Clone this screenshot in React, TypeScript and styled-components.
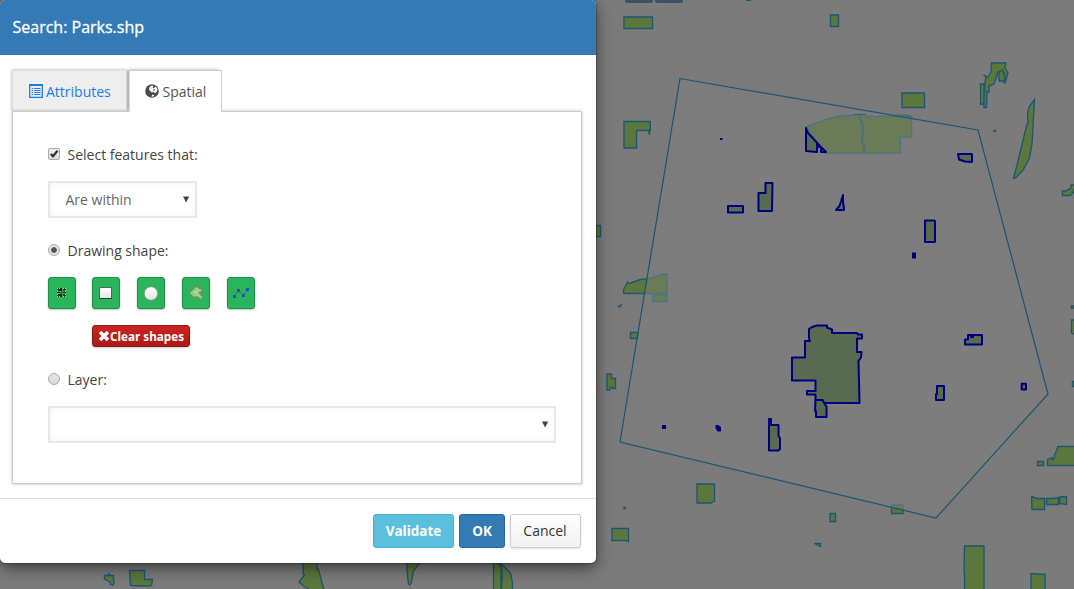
import React from 'react';
import styled, { createGlobalStyle } from 'styled-components';

const GlobalStyle = createGlobalStyle`
  * { box-sizing: border-box; }
  body {
    margin: 0;
    overflow: hidden;
    background: #7b7b7b;
    font-family: "Open Sans", "Noto Sans", sans-serif;
    font-size: 14px;
    color: #444;
  }
`;

const Page = styled.div`
  position: relative;
  width: 1074px;
  height: 589px;
  overflow: hidden;
`;

const MapCanvas = styled.svg`
  position: absolute;
  inset: 0;
  display: block;
  .park { fill: #5c773c; stroke: #1c5673; stroke-width: 1.35; }
  .faded { fill: #6b7b58; stroke: #4c7580; stroke-width: 1.35; }
  .divider { fill: none; stroke: #4f7078; stroke-width: 2.5; }
  .selected { fill: #566b50; stroke: #00007f; stroke-width: 2; stroke-linejoin: round; }
  .area { fill: #7d7d7d; stroke: none; }
  .outline { fill: none; stroke: #1c5673; stroke-width: 1.2; }
`;

const Dialog = styled.section`
  position: relative;
  width: 596px;
  height: 563px;
  display: flex;
  flex-direction: column;
  background: #fff;
  border-radius: 5px;
  box-shadow: 0 5px 15px rgba(0, 0, 0, 0.5), 0 0 2px rgba(0, 0, 0, 0.7);
`;

const Header = styled.header`
  height: 55px;
  padding: 0 12.5px;
  flex: none;
  display: flex;
  align-items: center;
  background: #337ab7;
  border-bottom: 1px solid #3273a9;
  border-radius: 5px 5px 0 0;
  color: #fff;
  font-size: 16px;
  -webkit-text-stroke: 0.3px #fff;
`;

const Body = styled.div`
  height: 443px;
  padding: 15px 14px 0 12px;
`;

const Tabs = styled.nav`
  display: flex;
  gap: 2px;
  height: 41px;
`;

const Tab = styled.div<{ $active?: boolean }>`
  position: relative;
  z-index: ${p => (p.$active ? 2 : 0)};
  width: ${p => (p.$active ? 93 : 115)}px;
  height: ${p => (p.$active ? 42 : 41)}px;
  padding: 1px 0 ${p => (p.$active ? 2 : 0)}px ${p => (p.$active ? 15 : 16)}px;
  display: flex;
  align-items: center;
  gap: ${p => (p.$active ? 3.5 : 3)}px;
  font-size: 14px;
  color: ${p => (p.$active ? '#555' : '#1a7cf5')};
  background: ${p => (p.$active ? '#fff' : '#eee')};
  border: 1px solid ${p => (p.$active ? '#ccc' : '#e2e2e2')};
  border-bottom: 0;
  border-left-color: #ddd;
  box-shadow: ${p => (p.$active ? '-2px -1px 3px -1px rgba(0,0,0,.4)' : '0 0 3px rgba(0,0,0,.35)')};
  clip-path: inset(-4px ${p => (p.$active ? 0 : -2)}px 0 -3px);
  svg { flex: none; margin-bottom: ${p => (p.$active ? 0 : 2)}px; }
`;

const Panel = styled.div`
  position: relative;
  z-index: 1;
  height: 373px;
  padding: 33px 25px 0 35px;
  background: #fff;
  border: 1px solid #ccc;
  box-shadow: 0 0 3px rgba(0, 0, 0, 0.25);
`;

const Choice = styled.label`
  display: flex;
  align-items: center;
  gap: 7px;
  height: 18px;
`;

const Check = styled.span`
  width: 12px;
  height: 12px;
  margin-right: 0.5px;
  border: 1px solid #aaa;
  border-radius: 2px;
  background: linear-gradient(#eee, #ddd);
  svg { display: block; overflow: visible; }
`;

const Radio = styled.span<{ $on?: boolean }>`
  width: 12px;
  height: 12px;
  margin-right: 0.5px;
  border: 1px solid #aaa;
  border-radius: 50%;
  background: ${p => (p.$on ? 'radial-gradient(circle, #555 0 2.4px, #e3e3e3 3.3px)' : 'linear-gradient(#e8e8e8, #d8d8d8)')};
`;

const Select = styled.div<{ $wide?: boolean }>`
  width: ${p => (p.$wide ? 508 : 149)}px;
  height: 37px;
  margin: ${p => (p.$wide ? '18px 0 0' : '18px 0 23px')};
  padding: 0 5px 0 15.5px;
  display: flex;
  align-items: center;
  justify-content: space-between;
  color: #666;
  border: 2px solid #e8e8e8;
  background: #fff;
  box-shadow: inset 0 0 5px rgba(0, 0, 0, 0.05);
  svg { margin-bottom: 1px; }
`;

const Tools = styled.div`
  display: flex;
  gap: 17px;
  margin-top: 18px;
`;

const Tool = styled.button`
  width: 28px;
  height: 32px;
  padding: 0;
  border: 1px solid #208e46;
  border-radius: 3px;
  background: #2ab45c;
  box-shadow: 0 1px 2px rgba(0, 0, 0, 0.25);
  display: flex;
  align-items: center;
  justify-content: center;
  &:first-child { margin-right: -1px; }
`;

const ClearButton = styled.button`
  width: 98px;
  height: 22px;
  margin: 16px 0 23px 44px;
  padding: 0 0 1px;
  display: flex;
  align-items: center;
  justify-content: center;
  border: 1px solid #8b1714;
  border-radius: 3px;
  background: linear-gradient(#cb2422, #ac1a18);
  box-shadow: 0 1px 2px rgba(0, 0, 0, 0.2);
  color: #fff;
  font: bold 11.7px "Open Sans", sans-serif;
  white-space: nowrap;
  svg { flex: none; }
`;

const Footer = styled.footer`
  height: 65px;
  padding: 15px 15px 0;
  display: flex;
  justify-content: flex-end;
  gap: 5px;
  border-top: 1px solid #ddd;
`;

const tones = {
  info: ['#5bc0de', '#46b0cf', '#fff'],
  primary: ['#337ab7', '#2c6699', '#fff'],
  plain: ['linear-gradient(#fff, #f1f1f1)', '#ccc', '#333'],
};

const Action = styled.button<{ $tone: keyof typeof tones; $width: number }>`
  width: ${p => p.$width}px;
  height: 34px;
  padding: 0 ${p => (p.$tone === 'plain' ? 1 : 0)}px 1px 0;
  border: 1px solid ${p => tones[p.$tone][1]};
  border-radius: 3px;
  background: ${p => tones[p.$tone][0]};
  color: ${p => tones[p.$tone][2]};
  font: ${p => (p.$tone === 'plain' ? '400 14px' : '700 13.5px')} "Open Sans", sans-serif;
  ${p => p.$tone === 'plain' && 'box-shadow: 0 1px 2px rgba(0,0,0,.12);'}
`;

const Arrow = () => (
  <svg width="7" height="7" viewBox="0 0 7 7"><path d="M0 .5H6.2L3.1 6.5Z" fill="#444" /></svg>
);

const ListIcon = () => (
  <svg width="14" height="14" viewBox="0 0 14 14" fill="none" stroke="#1a7cf5">
    <path d="M.7 .7H13.3V13.3H.7Z M.5 1.3H13.5" strokeWidth="1.3" />
    <path d="M2.7 4.500H4.200M2.700 6.500H4.200M2.700 8.500H4.200M2.700 10.500H4.200M5.200 4.500H11.500M5.200 6.500H11.500M5.200 8.500H11.500M5.200 10.500H11.500" />
  </svg>
);

const GlobeIcon = () => (
  <svg width="14" height="14" viewBox="0 0 14 14">
    <circle cx="7" cy="7" r="6.8" fill="#4a4a4a" />
    <path d="M4.600 3 7 1.300 8.600 2 7.700 3.500 8.800 4.300 10.900 2.600 12.600 5.300 11.600 7.800 10.200 9.300 8.600 8 6.700 8.500 5.200 7 4 5.600Z M7.300 10.600 9.500 11.300 8.300 12.600 6.500 12.700Z" fill="#fff" />
    <path d="M8.400 5.300 10 5.600 9.300 6.800 8.200 6.500Z M5.400 4 6.400 3.600 6.200 4.700Z" fill="#4a4a4a" />
  </svg>
);

const SpatialMap = () => (
  <MapCanvas width="1074" height="589" viewBox="0 0 1074 589">
    <path className="area" d="M680 78 978 130 1048 394 936 518 620 442Z" />
    <path d="M625 0H653V1Q653 3 651 3H627Q625 3 625 1ZM655 0H683V1Q683 3 681 3H657Q655 3 655 1Z" fill="#3f5069" />
    <path d="M746 0H751V1H746Z" fill="#1c5673" />
    <g className="park">
      <path d="M624 17H652.5V28.5H624Z M830.5 15H838.5V26.5H830.5Z" />
      <path d="M624 121.500H650.300V130.500H649.500V134H649V130.500H636.500V148H624Z" />
      <path d="M902 93H924.500V107.500H902Z" />
      <path d="M991.500 63H1006L1005 67 1008 73 1005 83 1003.500 82 1004.500 74 1001 71 998 72 994 84 989 86 989 92 987 91.500 986.500 107.500 984 107.500V104H980.500V84H984V105H983.500L985 82 986 77 983.500 75 988 77 991 72Z" />
      <path d="M999 72 1003 70 1005 77 1004 81H999Z" />
      <path d="M1034.500 99.500 1029 107 1027.500 113 1028 122 1026.500 126 1017 165 1013.500 178 1015.500 178 1023 170 1029.500 158 1032 144Z" />
      <path d="M1062.500 191H1065.500L1071 188V185H1076V188.500L1073.500 190V192L1070.500 195.500H1062.500Z" />
      <path d="M594 225.500H600.500V236.500H594Z" />
      <path d="M645 293.500H624L623.200 290.500 627.500 282 629.500 283.500 640.500 279.500 647 278.700" />
      <path d="M630.500 332.500H638L637.500 338.500H630.500Z" />
      <path d="M607 374H611.500V378.500H615.500V388.500H612.500V387.500H610V390H607Z" />
      <path d="M697 484H714.500V501L711 503H697Z M612 528.500H628.500V541.500L626 540.500H612Z M830 513.500H835.500V521.500H830Z" />
      <path d="M814.500 543.500H820.500V546.500Z" />
      <path d="M891.500 507.500 903 510V513.500H891.500Z" />
      <path d="M1037.500 461.500H1043.500V465.500H1037.500Z M1047.500 459.500 1052 457.500V460L1054.500 458V455L1056 452 1058 446.500H1076V465.500H1047.500Z" />
      <path d="M1031.500 496.500 1037 498.500H1044.500V509.500H1032Z M1046.500 498.500 1053 498.500 1058.500 497.500V504.500H1046.500Z M1060 497 1066.500 496.500V504.500L1059.500 503.500Z" />
      <path d="M964.500 546H984V592H964.500V575L964 570Z M1031 573.500 1045 574.500V592H1031Z" />
      <path d="M1071.500 306H1076V308H1071.500Z M1071.500 320H1076V335L1071.500 333Z M1072.500 381.500H1076V386.500H1072.500Z" />
      <path d="M104.500 575.500H109V574L110.500 575.500H113.500V580.500L114.500 582 113 585 110.500 584.500V582.500L107.500 580.500 104.500 579Z" />
      <path d="M129.500 570.500H144.500V579.500H152.500L151.500 585.500 146 586 130.500 585.500Z" />
      <path d="M303 560V574L304.500 575 299 582 303.500 586 310 590H324L318.500 569.500H317V560Z" />
      <path d="M407 560V571L408.500 584 410 585 411.500 582 413.500 571 422 560Z" />
      <path d="M493.500 560H497L501 568V590H493.500Z M500 563 504.500 567 510.500 573 512.500 583V592H501L502.500 575Z" />
      <path d="M618.500 306.500l2.500-1.500-1 2zM624 507.500h1.500v1h-1.500zM994 130.500h1.500v.8h-1.500z" />
    </g>
    <g className="faded">
      <path d="M645 293.500 647 278.700 658 276 664 274H667V293.500Z" />
      <path d="M652.500 295H667V301.500H652.500Z" />
      <path d="M806 127 819 122 827 119 839 116 855 115V114.500H865.500V116.500H911.500V137H900.500V153H825Z" />
      <path d="M891.500 505H903V510L891.500 507.500Z" />
    </g>
    <path className="divider" d="M859 115.500 862 123 863 128 862 141 864.500 147 864.500 153" />
    <path d="M854 114.500H865M894 115H906L911 116.500" className="outline" opacity=".6" />
    <path className="outline" d="M680 78.500 978 130 1048 394 936 518 620 442Z" />
    <g className="selected">
      <path d="M806 128V151L817 152V146.500L820 146 808 133ZM817 143 826 152H821V147H817Z" />
      <path d="M958 154H972V162L965 161.500 959 159.500Z M728 206H743V212.500H728Z" />
      <path d="M765.500 183H772.500L772 211H758.500V193H765.500Z" />
      <path d="M843 195V202L844 208.500V210H836L839.500 206Z" />
      <path d="M925 220.500H934.500L935 221.500V242H925Z" />
      <path d="M965 339.500H968V335H982V344.500H965ZM971 335V337H973V335" />
      <path d="M937 386H944V400H936V394H937ZM1021.700 383.700H1026V389.500H1021.700Z" />
      <path d="M769 419H771V425H778.500V436L780 438V449L778.500 450.500H769Z" />
      <path d="M792 357.500H805V341L810 341 809 338.500V329L812 327 817 325.500H827V327.500L832 329.500V333H857L858 334.500H862V338.500H857V352H861.500L861 357.500 858.500 361 859.500 403H822.500V400H815.500V394.500H807V391H815.500V380.500H792Z" />
      <path d="M815.500 400H822.500L825 404.500 826.500 406.500V417H816V411H815Z" />
    </g>
    <path d="M912 252.500H916V258.500H912ZM662 425H666V429H662ZM715.500 425H718L721 427V431.500H717.500L715.500 428ZM720 138H722.500V140H720Z" fill="#00007f" />
  </MapCanvas>
);

export default function App() {
  return (
    <Page>
      <GlobalStyle />
      <SpatialMap />
      <Dialog>
        <Header>Search: Parks.shp</Header>
        <Body>
          <Tabs>
            <Tab><ListIcon />Attributes</Tab>
            <Tab $active><GlobeIcon />Spatial</Tab>
          </Tabs>
          <Panel>
            <Choice>
              <Check><svg width="10" height="10" viewBox="0 0 10 10"><path d="M1.800 5 4 7.300 8.500 1.800" fill="none" stroke="#333" strokeWidth="2.300" /></svg></Check>
              Select features that:
            </Choice>
            <Select>Are within<Arrow /></Select>
            <Choice><Radio $on />Drawing shape:</Choice>
            <Tools>
              <Tool>
                <svg width="10" height="10" viewBox="0 0 10 10" shapeRendering="crispEdges">
                  <path d="M0 0H4V3H0ZM6 0H9V3H6ZM0 6H4V9H0ZM6 6H9V9H6Z" fill="#14381c" />
                  <path d="M0 0H1V1H0ZM2 0H3V1H2ZM0 2H1V3H0ZM6 0H7V1H6ZM8 0H9V1H8ZM8 2H9V3H8ZM0 6H1V7H0ZM0 8H1V9H0ZM2 8H3V9H2ZM6 8H7V9H6ZM8 8H9V9H8ZM8 6H9V7H8Z" fill="#8fe08f" />
                  <path d="M4 0H5V9H4ZM0 4H9V5H0Z" fill="#142018" />
                  <path d="M4 3H5V4H6V5H5V6H4V5H3V4H4Z" fill="#d7097e" />
                </svg>
              </Tool>
              <Tool>
                <svg width="14" height="12" viewBox="0 0 14 12">
                  <defs><linearGradient id="shade" x2="0" y2="1"><stop stopColor="#fff" /><stop offset="1" stopColor="#e4e4e4" /></linearGradient></defs>
                  <path d="M.5 .5H12.500V11.500H.5Z" fill="url(#shade)" stroke="#50675a" /><path d="M.5 11.500H13" stroke="#293f31" />
                </svg>
              </Tool>
              <Tool><svg width="15" height="15" viewBox="0 0 15 15"><circle cx="7" cy="7.500" r="6.800" fill="url(#shade)" stroke="#71907b" strokeWidth=".8" /></svg></Tool>
              <Tool>
                <svg width="16" height="16" viewBox="0 0 16 16">
                  <path d="M1 8 8.500 1 11.500 3.600 13 3.200 14.500 5.400 11.300 8 15 12 12.700 14.700 9.300 11.800 5.500 12.300Z" fill="#9bd58b" stroke="#758c66" strokeWidth="1.300" strokeLinejoin="round" />
                  <path d="M4.500 9 8.500 5.200 10.500 6.500 8 9Z" fill="#b7efab" stroke="#69b95a" strokeWidth=".7" />
                </svg>
              </Tool>
              <Tool>
                <svg width="16" height="12" viewBox="0 0 16 12">
                  <path d="M1.500 9.500 5.500 3.500 10.500 8.500 14.500 2.500" fill="none" stroke="#746b62" strokeWidth="1.300" />
                  <path d="M.8 8.800H2.200V10.200H.8ZM4.800 2.800H6.200V4.200H4.800ZM9.800 7.800H11.200V9.200H9.800ZM13.800 1.800H15.200V3.200H13.800Z" fill="#2994ff" stroke="#0754dc" strokeWidth="1.400" />
                </svg>
              </Tool>
            </Tools>
            <ClearButton>
              <svg width="12" height="12" viewBox="0 0 12 12"><path d="M2 2 10 10M10 2 2 10" stroke="#fff" strokeWidth="3.600" /></svg>
              Clear shapes
            </ClearButton>
            <Choice><Radio />Layer:</Choice>
            <Select $wide><span /><Arrow /></Select>
          </Panel>
        </Body>
        <Footer>
          <Action $tone="info" $width={81}>Validate</Action>
          <Action $tone="primary" $width={46}>OK</Action>
          <Action $tone="plain" $width={71}>Cancel</Action>
        </Footer>
      </Dialog>
    </Page>
  );
}
